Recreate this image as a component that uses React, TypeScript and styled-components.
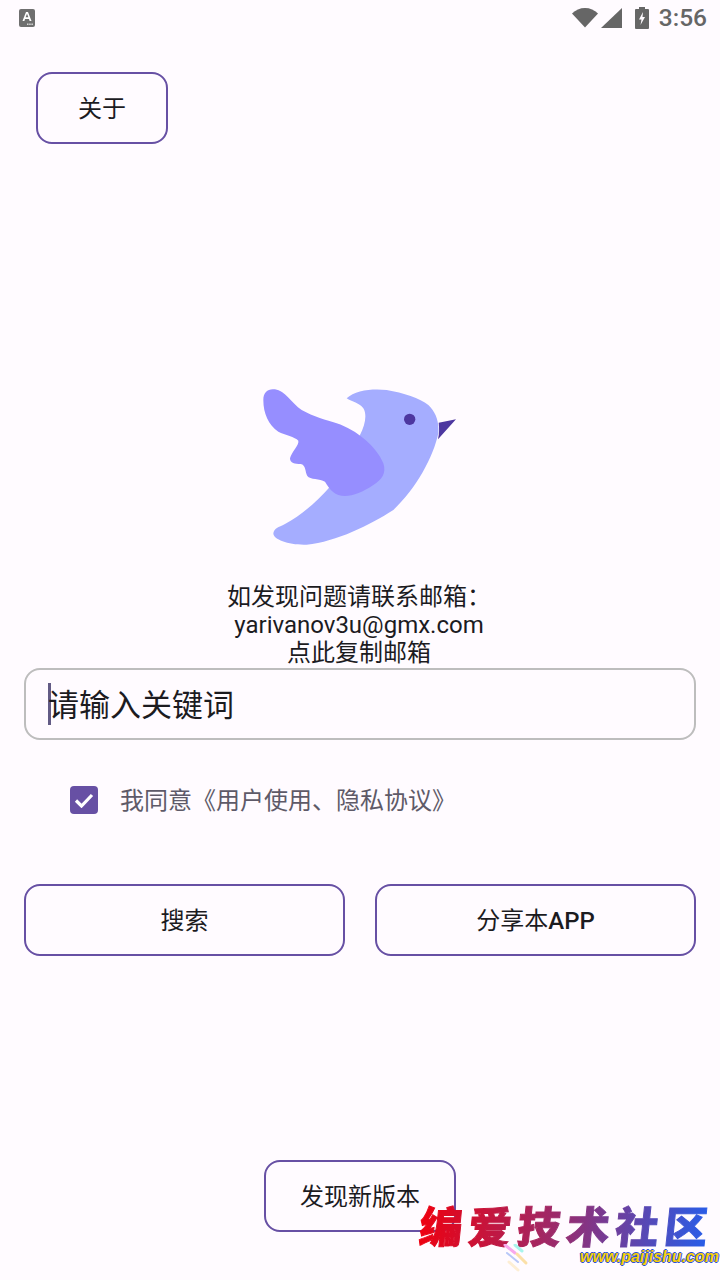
import React from "react";
import styled, { createGlobalStyle } from "styled-components";

const Global = createGlobalStyle`
  html, body {
    margin: 0;
    padding: 0;
    background: #fffbff;
  }
`;

const Screen = styled.div`
  position: relative;
  width: 720px;
  height: 1280px;
  overflow: hidden;
  display: flex;
  flex-direction: column;
  background: #fffbff;
  color: #1c1b1f;
  font-family: Roboto, "Noto Sans CJK SC", sans-serif;
`;

const StatusBar = styled.div`
  height: 36px;
  padding: 0 13px 0 19px;
  display: flex;
  align-items: center;
  justify-content: space-between;
`;

const StatusIcons = styled.div`
  display: flex;
  align-items: center;
`;

const Cell = styled.svg`
  margin-left: 3px;
`;

const Battery = styled.svg`
  margin-left: 13px;
`;

const Time = styled.span`
  margin-left: 10px;
  font-size: 24.5px;
  line-height: 36px;
  font-weight: 500;
  color: #666666;
`;

const OutlineButton = styled.button<{ $width?: number }>`
  box-sizing: border-box;
  width: ${(p) => (p.$width ? `${p.$width}px` : "auto")};
  height: 72px;
  padding: 0 0 4px;
  border: 2px solid #6750a4;
  border-radius: 16px;
  background: transparent;
  font-family: inherit;
  font-size: 24px;
  color: #1c1b1f;
`;

const Strong = styled.b`
  font-weight: 500;
`;

const AboutRow = styled.div`
  margin-top: 36px;
  padding-left: 36px;
`;

const Logo = styled.svg`
  display: block;
  margin: 226px 0 0 230px;
`;

const Contact = styled.div`
  margin: 23px 2px -1px 0;
  text-align: center;
  font-size: 24px;
  line-height: 28px;
  color: #1c1b1f;
`;

const KeywordBox = styled.div`
  box-sizing: border-box;
  margin: 2px 24px 0;
  height: 72px;
  padding: 0 0 4px 22px;
  display: flex;
  align-items: center;
  border: 2px solid #bdbdbd;
  border-radius: 16px;
  font-size: 31px;
  color: #1c1b1f;
`;

const Caret = styled.span`
  flex: none;
  width: 3px;
  height: 42px;
  margin: 4px -3px 0 0;
  background: #625b85;
`;

const AgreeRow = styled.label`
  margin: 46px 0 0 70px;
  height: 28px;
  display: flex;
  align-items: center;
  gap: 22px;
  font-size: 24px;
  color: #5e5a68;
`;

const AgreeText = styled.span`
  margin-top: -4px;
`;

const CheckBox = styled.span`
  width: 28px;
  height: 28px;
  border-radius: 4px;
  background: #6750a4;
  display: flex;
  align-items: center;
  justify-content: center;
`;

const ActionRow = styled.div`
  margin-top: 70px;
  padding: 0 24px;
  display: flex;
  justify-content: space-between;
`;

const Footer = styled.div`
  margin-top: 204px;
  display: flex;
  justify-content: center;
`;

const Watermark = styled.div`
  position: absolute;
  left: 420px;
  top: 1198px;
  width: 300px;
`;

const WatermarkTitle = styled.div`
  font-family: "Noto Sans CJK SC", sans-serif;
  font-size: 43px;
  line-height: 52px;
  letter-spacing: 6px;
  font-weight: 900;
  white-space: nowrap;
  transform: skewX(-6deg);
  background: linear-gradient(90deg, #ee0010 0%, #9c2a6a 45%, #2a5ce6 95%);
  -webkit-background-clip: text;
  background-clip: text;
  color: transparent;
  -webkit-text-stroke: 1px transparent;
`;

const WatermarkUrl = styled.div`
  margin-left: 160px;
  font-family: "Liberation Sans", sans-serif;
  font-size: 16px;
  line-height: 14px;
  font-weight: 700;
  font-style: italic;
  color: #f7d008;
  text-shadow: 1px 0 #2d4fd8, -1px 0 #2d4fd8, 0 1px #2d4fd8, 0 -1px #2d4fd8;
  white-space: nowrap;
`;

const Streaks = styled.svg`
  position: absolute;
  left: 500px;
  top: 1244px;
`;

const App = () => {
  return (
    <Screen>
      <Global />
      <StatusBar>
        <svg width="16" height="18" viewBox="0 0 16 18">
          <rect width="16" height="18" rx="2" fill="#6f6f6f" />
          <path d="M3.5 12 7 3h2l3.5 9H10.6l-.6-2H6l-.6 2ZM6.6 8.3h2.8L8 4.8Z" fill="#fff" />
          <path d="M8 14.5h1.5V16H8ZM10.2 14.5h1.5V16h-1.5ZM12.4 14.5h1.5V16h-1.500Z" fill="#d8d8d8" />
        </svg>
        <StatusIcons>
          <svg width="26" height="20" viewBox="0 0 26 20">
            <path d="M0 5.500C3.500 2 8 0 13 0s9.500 2 13 5.500L13 19.500Z" fill="#666666" />
          </svg>
          <Cell width="21" height="20" viewBox="0 0 21 20">
            <path d="M21 0v20H0Z" fill="#666666" />
          </Cell>
          <Battery width="14" height="22" viewBox="0 0 14 22">
            <path
              d="M4 0h6v2h3a1 1 0 0 1 1 1v18a1 1 0 0 1-1 1H1a1 1 0 0 1-1-1V3a1 1 0 0 1 1-1h3Z"
              fill="#666666"
            />
            <path d="M8 5 4 12.500h2.500L5.500 18l4.500-8H7.500Z" fill="#fffbff" />
          </Battery>
          <Time>3:56</Time>
        </StatusIcons>
      </StatusBar>

      <AboutRow>
        <OutlineButton $width={132}>关于</OutlineButton>
      </AboutRow>

      <Logo width="240" height="190" viewBox="0 0 720 570">
        <path
          d="M350 85C375 60 430 55 470 60C520 68 570 85 595 105C615 125 628 150 625 190C610 260 560 355 490 420C420 465 320 515 230 524C180 526 130 510 130 490C132 475 145 472 165 462C215 435 260 395 300 350L390 195C405 165 412 135 400 115C390 100 365 95 350 85Z"
          fill="#a5adff"
        />
        <path
          d="M100 90C100 65 115 55 135 58C165 62 185 100 215 120C250 140 290 150 320 160C380 180 440 230 460 280C470 310 455 330 430 345C400 365 370 378 345 378C315 378 300 360 285 335C270 325 240 330 232 318C225 305 228 285 212 282C195 282 180 280 180 265C185 245 208 225 205 212C195 200 165 195 145 185C115 165 100 130 100 90Z"
          fill="#968eff"
        />
        <circle cx="539" cy="148" r="17" fill="#4d37a0" />
        <path d="M626 158L678 148L624 208C628 190 628 175 626 158Z" fill="#4d37a0" />
      </Logo>

      <Contact>
        <div>如发现问题请联系邮箱：</div>
        <div>yarivanov3u@gmx.com</div>
        <div>点此复制邮箱</div>
      </Contact>

      <KeywordBox>
        <Caret />
        请输入关键词
      </KeywordBox>

      <AgreeRow>
        <CheckBox>
          <svg width="20" height="16" viewBox="0 0 20 16">
            <path d="M2 8.500 7.500 14 18 3" fill="none" stroke="#fff" strokeWidth="3.200" />
          </svg>
        </CheckBox>
        <AgreeText>我同意《用户使用、隐私协议》</AgreeText>
      </AgreeRow>

      <ActionRow>
        <OutlineButton $width={321}>搜索</OutlineButton>
        <OutlineButton $width={321}>
          分享本<Strong>APP</Strong>
        </OutlineButton>
      </ActionRow>

      <Footer>
        <OutlineButton $width={192}>发现新版本</OutlineButton>
      </Footer>

      <Watermark>
        <WatermarkTitle>编爱技术社区</WatermarkTitle>
        <WatermarkUrl>www.paijishu.com</WatermarkUrl>
      </Watermark>
      <Streaks width="30" height="30" viewBox="0 0 30 30">
        <path d="M5 1l10 8" stroke="#f8a8ec" strokeWidth="3" strokeLinecap="round" />
        <path d="M15 1l7 6" stroke="#a8f4ec" strokeWidth="3" strokeLinecap="round" />
        <path d="M7 9l11 9" stroke="#b8c8f8" strokeWidth="2" strokeLinecap="round" />
        <path d="M17 10l9 9" stroke="#fbe0a8" strokeWidth="3" strokeLinecap="round" />
        <path d="M9 18l9 8" stroke="#fdeed4" strokeWidth="3" strokeLinecap="round" />
      </Streaks>
    </Screen>
  );
};

export default App;
